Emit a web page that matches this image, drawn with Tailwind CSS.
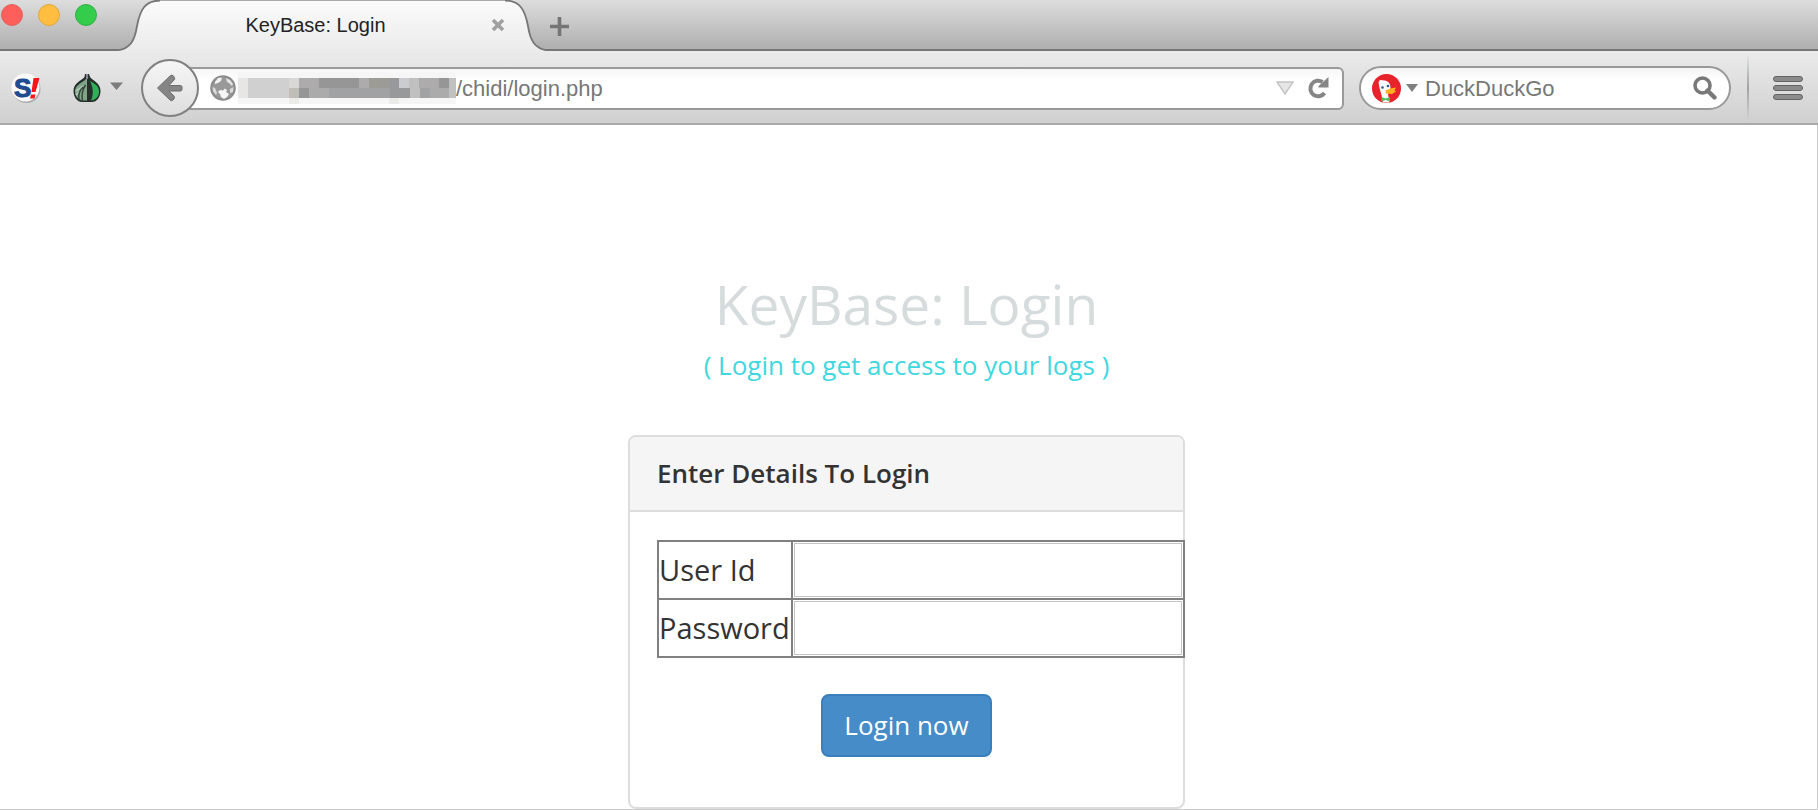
<!DOCTYPE html>
<html lang="en">
<head>
  <meta charset="UTF-8" />
  <meta name="viewport" content="width=device-width, initial-scale=1.0"/>
  <title>KeyBase: Login</title>
  <script src="https://cdn.jsdelivr.net/npm/@tailwindcss/browser@4"></script>
</head>
<body class="bg-white min-h-screen flex flex-col font-['Liberation_Sans',sans-serif]">
  <!-- Tab strip -->
  <header class="flex h-[51px] bg-linear-to-b from-[#dddddd] to-[#adadad] shadow-[inset_0_-2px_0_#777777]">
    <div class="flex gap-[15px] pl-px mt-1 mr-[18px]">
      <button aria-label="Close window" class="size-[22px] rounded-full bg-[#ff5f5a] border border-[#e2605c]"></button>
      <button aria-label="Minimize window" class="size-[22px] rounded-full bg-[#ffbe3f] border border-[#e0a73c]"></button>
      <button aria-label="Zoom window" class="size-[22px] rounded-full bg-[#34cc4b] border border-[#2fb043]"></button>
    </div>
    <div class="flex">
      <svg class="w-[45px] h-[51px]" viewBox="0 0 45 51">
        <defs>
          <linearGradient id="tab" x1="0" y1="0" x2="0" y2="51" gradientUnits="userSpaceOnUse">
            <stop offset="0" stop-color="#fbfbfb"/><stop offset="1" stop-color="#ebebeb"/>
          </linearGradient>
        </defs>
        <path fill="url(#tab)" d="M0 51C16 51 20 39 22 26C25 10 30 0 45 0V51Z"/>
        <path fill="none" stroke="#777" stroke-width="1.8" d="M0 50.2C16 50.2 20 39 22 26C25 10 30 .5 45 .5"/>
      </svg>
      <div class="w-[345px] flex items-center pb-[2px] bg-linear-to-b from-[#fbfbfb] to-[#ebebeb] border-t border-[#aaaaaa]">
        <span class="flex-1 text-center text-[20px] leading-6 text-[#222222]">KeyBase: Login</span>
        <button aria-label="Close tab" class="ml-5">
          <svg class="size-[14px]" viewBox="0 0 14 14"><path d="M2 2L12 12M12 2L2 12" stroke="#a0a0a0" stroke-width="3.600"/></svg>
        </button>
      </div>
      <svg class="w-[45px] h-[51px]" viewBox="0 0 45 51">
        <path fill="url(#tab)" d="M45 51C29 51 25 39 23 26C20 10 15 0 0 0V51Z"/>
        <path fill="none" stroke="#777" stroke-width="1.8" d="M45 50.2C29 50.2 25 39 23 26C20 10 15 .5 0 .5"/>
      </svg>
    </div>
    <button aria-label="New tab" class="pt-[2px]">
      <svg class="size-[19px]" viewBox="0 0 19 19"><path d="M9.500 0V19M0 9.500H19" stroke="#757575" stroke-width="3.600"/></svg>
    </button>
  </header>

  <!-- Toolbar -->
  <nav class="flex items-center h-[74px] pt-[2px] pl-[11px] pr-[15px] bg-linear-to-b from-[#ebebeb] to-[#d0d0d0] border-b-2 border-[#a9a9a9]">
    <button aria-label="NoScript">
      <svg class="size-[30px]" viewBox="0 0 30 30">
        <circle cx="15.500" cy="16" r="14" fill="#aaa"/>
        <circle cx="14.500" cy="14.500" r="14" fill="#fafafa"/>
        <text x="3" y="24" font-family="Liberation Sans, sans-serif" font-weight="bold" font-size="26" fill="#1f4b8f" stroke="#1f4b8f">S</text>
        <path d="M22.500 5H28.500L24.500 19H20.500ZM20 21.500H24.500L23.500 25.500H19Z" fill="#f5151b"/>
      </svg>
    </button>
    <button aria-label="Tor" class="ml-8 flex items-center gap-[9px]">
      <svg class="size-7" viewBox="0 0 28 28">
        <path d="M12 0H16L17 3C20 7 27.500 9 27.500 17C27.500 23 24 28 19 28H9C4 28 .5 23 .5 17C.5 9 8 7 11.500 3Z" fill="#26302b"/>
        <path d="M13 0H15V5H13Z" fill="#8d7f9e"/>
        <path d="M13 5C9 9 2 11 2 17.500C2 22 5 25 9 26.500H14V5Z" fill="#7fa487"/>
        <path d="M17 7C22 10 26 12 26 17.500C26 23 22 26 18 26.500C21 20 20 13 17 7Z" fill="#2fb058"/>
        <path d="M3 17L10 12M3 21L9 15" stroke="#bcd0bd" stroke-width="1.500"/>
        <path d="M6 26C5 21 6 17 10 13M9.500 27C8.500 21 9 16 12.500 11" stroke="#34463a" stroke-width="1.500" fill="none"/>
      </svg>
      <svg class="w-[13px] h-2 mb-1" viewBox="0 0 13 8"><path d="M0 .5H13L6.500 8Z" fill="#7c7c7c"/></svg>
    </button>
    <button aria-label="Back" class="relative ml-[18px] size-[58px] shrink-0 rounded-full border-2 border-[#808080] bg-linear-to-b from-[#f6f6f6] to-[#dedede] flex items-center justify-center">
      <svg class="w-[26px] h-7" viewBox="0 0 26 28">
        <path d="M13.500 1.500Q15 .5 16.500 2L17.500 3.500Q18 5 17 6L12 11.500H23.500Q25 11.500 25 13V15.500Q25 17 23.500 17H12L17 22Q18 23.500 17 25L16 26Q14.500 27.500 13 26L.5 14Z" fill="#858585" stroke="#6e6e6e" stroke-linejoin="round"/>
      </svg>
    </button>
    <div class="flex-1 min-w-0 -ml-[10px] h-[43px] flex items-center pl-[19px] pr-[13px] rounded-r-md border-2 border-[#999999] bg-linear-to-b from-[#f6f6f6] to-white to-30%">
      <svg class="size-[26px] shrink-0" viewBox="0 0 26 26">
        <circle cx="13" cy="13" r="11.800" fill="#999" stroke="#8b8b8b" stroke-width="2"/>
        <path d="M8 3L12 2.500L11 6L8 8L5 9L5 7Z" fill="#f2f2f2"/>
        <path d="M16 3L20 5L23 9L22 11L19 8L17 7Z" fill="#e4e4e4"/>
        <path d="M8 17L10 15L13 15.500L15 13.500L17 15L16 17L19 19L17 22L14 24L11 22L10 19Z" fill="#f6f6f6"/>
        <path d="M2.500 12L5 13L7 18L6 20L3 16ZM20 14L23.500 12L23 17L20 18Z" fill="#dcdcdc"/>
      </svg>
      <!-- Hidden host name -->
      <svg class="w-[220px] h-8 shrink-0" viewBox="-2 0 220 32" shape-rendering="crispEdges">
        <path fill="#f6f6f6" d="M0 0H218V32H0Z"/>
        <path fill="#e8e6e5" d="M0 6H10V26H0Z"/>
        <path fill="#d0d0d1" d="M10 6H51V26H10Z"/>
        <path fill="#dad8d5" d="M51 6H61V16H51Z"/>
        <path fill="#c0bdb8" d="M51 16H61V26H51Z"/>
        <path fill="#aeabac" d="M61 6H81V16H61ZM121 6H131V16H121ZM181 6H201V16H181Z"/>
        <path fill="#979697" d="M81 6H121V16H81ZM61 16H71V26H61ZM201 6H211V16H201Z"/>
        <path fill="#9c9b96" d="M131 6H151V16H131Z"/>
        <path fill="#98999b" d="M151 6H161V16H151ZM152 16H172V26H152Z"/>
        <path fill="#cbccd0" d="M161 6H171V16H161Z"/>
        <path fill="#c0c0c0" d="M171 6H181V16H171ZM172 16H182V26H172ZM211 6H218V26H211Z"/>
        <path fill="#acabac" d="M71 16H91V26H71ZM192 16H211V26H192Z"/>
        <path fill="#a0a2a3" d="M91 16H152V26H91ZM182 16H192V26H182Z"/>
        <path fill="#ebebe8" d="M51 26H61V32H51ZM151 26H161V32H151Z"/>
      </svg>
      <input type="text" aria-label="Address" value="/chidi/login.php" class="flex-1 min-w-0 h-8 text-[22px] text-[#777777] bg-transparent outline-none" />
      <button aria-label="Show history">
        <svg class="w-[18px] h-[14px]" viewBox="0 0 18 14"><path d="M1 1H17L9 13Z" fill="#e6e6e6" stroke="#c4c4c4" stroke-width="1.400"/></svg>
      </button>
      <button aria-label="Reload" class="ml-[13px]">
        <svg class="size-[22px]" viewBox="0 0 22 22">
          <path d="M15.500 5A7.800 7.800 0 1 0 17.500 16" fill="none" stroke="#868686" stroke-width="4"/>
          <path d="M21.500 0V10.500H11.500V9Z" fill="#868686"/>
        </svg>
      </button>
    </div>
    <div class="ml-[15px] w-[372px] h-[44px] shrink-0 flex items-center pl-[11px] pr-3 rounded-full border-2 border-[#999999] bg-linear-to-b from-[#f4f4f4] to-white to-30%">
      <button aria-label="Choose search engine" class="flex items-center gap-[5px]">
        <svg class="size-[29px]" viewBox="0 0 29 29">
          <circle cx="14.500" cy="14.500" r="14.500" fill="#e8232c"/>
          <path d="M6.500 8L8 6L13 6.500C17 7.500 18.500 10 18.500 14L16 20L17.500 28.500H11L9.500 21L7.500 14Z" fill="#fbfbfb"/>
          <circle cx="10.500" cy="13.500" r="1.300" fill="#2b5c96"/>
          <circle cx="16" cy="12" r="1.300" fill="#2b5c96"/>
          <path d="M13.500 16.500L18 14.500L24 13.500L22.500 16.500L24 17.500L20 20L14 19.500Z" fill="#fbb41f"/>
          <path d="M9.500 23L13.500 24.500L18 23V27.500L13.500 26L9.500 27.500Z" fill="#59bd5c"/>
        </svg>
        <svg class="w-3 h-2" viewBox="0 0 12 8"><path d="M0 0H12L6 8Z" fill="#808080"/></svg>
      </button>
      <input type="text" aria-label="Search" placeholder="DuckDuckGo" class="ml-[7px] flex-1 min-w-0 h-8 text-[22px] placeholder:text-[#777777] bg-transparent outline-none" />
      <button aria-label="Submit search">
        <svg class="size-6" viewBox="0 0 24 24">
          <circle cx="9.500" cy="9.500" r="7.500" fill="none" stroke="#787878" stroke-width="3.600"/>
          <path d="M14.500 14.500L21.500 21.500" stroke="#787878" stroke-width="4.400" stroke-linecap="round"/>
        </svg>
      </button>
    </div>
    <div class="ml-4 w-[2px] h-[68px] shrink-0 bg-linear-to-b from-transparent via-[#9da4aa] to-transparent"></div>
    <button aria-label="Open menu" class="ml-6">
      <svg class="w-[30px] h-[25px]" viewBox="0 0 30 25" fill="#8b8b8b" stroke="#646464">
        <rect x=".5" y=".5" width="29" height="5" rx="2.500"/>
        <rect x=".5" y="9.500" width="29" height="5" rx="2.500"/>
        <rect x=".5" y="18.500" width="29" height="5" rx="2.500"/>
      </svg>
    </button>
  </nav>

  <!-- Login page -->
  <main class="flex-1 pt-[149px] pr-1 border-r border-b border-[#cccccc] text-[#333333] font-['Open_Sans',sans-serif]">
    <h1 class="text-center text-[55px] leading-[60px] text-[#d6dcdd]">KeyBase: Login</h1>
    <p class="mt-[13px] text-center text-[26px] leading-9 text-[#3fd8e0]">( Login to get access to your logs )</p>

    <form class="mt-[52px] mx-auto w-full max-w-[557px] border-2 border-[#dddddd] rounded-lg" onsubmit="return false">
      <h2 class="px-[27px] pt-[18px] pb-[19px] bg-[#f5f5f5] border-b-2 border-[#dddddd] rounded-t-md text-[26px] leading-9 font-semibold">Enter Details To Login</h2>
      <div class="pl-[27px] pt-7 pb-[50px]">
        <div class="-mr-[2px]">
          <table class="w-full border-collapse">
            <tr>
              <td class="border-2 border-[#808080] py-0 pl-0 pr-px w-px text-[29px] leading-9"><label for="user">User Id</label></td>
              <td class="border-2 border-[#808080] p-px"><input id="user" type="text" class="block w-full h-[54px] px-2 border border-[#c4c4c4] text-[26px] outline-none" /></td>
            </tr>
            <tr>
              <td class="border-2 border-[#808080] py-0 pl-0 pr-px w-px text-[29px] leading-9"><label for="pass">Password</label></td>
              <td class="border-2 border-[#808080] p-px"><input id="pass" type="password" class="block w-full h-[54px] px-2 border border-[#c4c4c4] text-[26px] outline-none" /></td>
            </tr>
          </table>
        </div>
        <div class="mt-9 pr-[27px]">
          <button type="submit" class="block mx-auto h-[63px] px-[21px] pb-[2px] rounded-lg bg-[#468cc8] border-2 border-[#3a7fbd] text-white text-[26px] leading-9">Login now</button>
        </div>
      </div>
    </form>
  </main>
</body>
</html>
